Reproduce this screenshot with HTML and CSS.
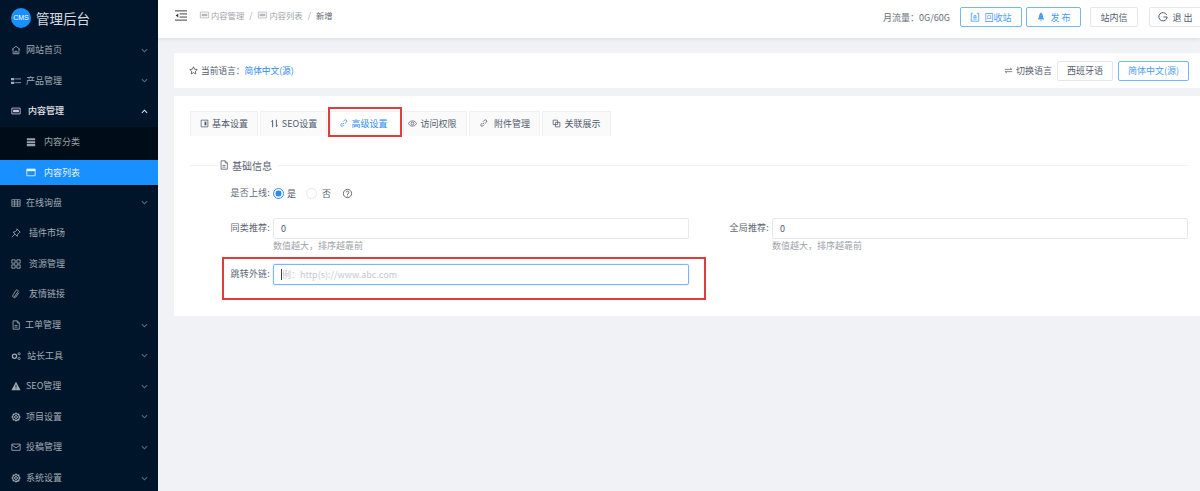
FILE: index.html
```html
<!DOCTYPE html>
<html lang="zh-CN">
<head>
<meta charset="utf-8">
<title>管理后台</title>
<link rel="stylesheet" href="styles.css">
</head>
<body>
<svg class="defs" width="0" height="0">
  <symbol id="i-doc" viewBox="0 0 12 12"><path d="M2.5 1h5l2.5 2.500V11h-7.500zM7.500 1v2.500H10M4.300 6.500h3.400M4.300 8.500h3.400" fill="none" stroke="currentColor"/></symbol>
  <symbol id="i-link" viewBox="0 0 12 12"><path d="M5 7l2-2M4.500 5.200L2.800 7a1.600 1.600 0 0 0 2.300 2.300l1.700-1.800M5.300 3.500L7 1.800a1.600 1.600 0 0 1 3 2.300L8 6" fill="none" stroke="currentColor"/></symbol>
  <symbol id="i-gear" viewBox="0 0 12 12"><circle cx="6" cy="6" r="1.700" fill="none" stroke="currentColor" stroke-width="1.200"/><circle cx="6" cy="6" r="4" fill="none" stroke="currentColor" stroke-width="1.300"/><path d="M6 .5v2M6 9.500v2M.5 6h2M9.500 6h2M2.100 2.100l1.400 1.400M8.500 8.500l1.400 1.400M2.100 9.900l1.400-1.400M8.500 3.500l1.400-1.400" stroke="currentColor" stroke-width="1.300"/></symbol>
  <symbol id="i-card" viewBox="0 0 12 12"><path d="M1 2.500h10v7H1z" fill="none" stroke="currentColor"/><path d="M2.500 4.500h7v3h-7z" fill="currentColor"/></symbol>
  <symbol id="i-chev" viewBox="0 0 8 5"><path d="M1 1l3 3 3-3" fill="none" stroke="currentColor" stroke-width="1.200"/></symbol>
</svg>
<div class="app">
  <aside class="sidebar">
    <div class="brand"><span class="brand-logo">CMS</span><span class="brand-name">管理后台</span></div>
    <nav class="menu">
      <a class="menu-item"><svg class="mi" viewBox="0 0 12 12"><path d="M1 5.500L6 1.500l5 4M2.500 4.500V10.500h7V4.500M4.800 10.500V7.500h2.400v3" fill="none" stroke="currentColor"/></svg><span class="ml gap-5">网站首页</span><svg class="chev"><use href="#i-chev"/></svg></a>
      <a class="menu-item"><svg class="mi" viewBox="0 0 12 12"><path d="M0 2.500h4v2.500H0zM0 7h4v2.500H0z" fill="currentColor"/><path d="M5 3.500h7M5 8h7" stroke="currentColor"/></svg><span class="ml gap-5">产品管理</span><svg class="chev"><use href="#i-chev"/></svg></a>
      <a class="menu-item open"><svg class="mi card"><use href="#i-card"/></svg><span class="ml gap-7">内容管理</span><svg class="chev up"><use href="#i-chev"/></svg></a>
      <div class="submenu">
        <a class="sub-item first"><svg class="si" viewBox="0 0 12 12"><path d="M1 1.500h10v2.500H1zM1 5h10v2.500H1zM1 8.500h10V11H1z" fill="currentColor"/></svg><span>内容分类</span></a>
        <a class="sub-item active"><svg class="si" viewBox="0 0 12 12"><path d="M1 2.500h10v8H1z" fill="none" stroke="currentColor"/><path d="M1 2.500h10v2.500H1z" fill="currentColor"/></svg><span>内容列表</span></a>
      </div>
      <a class="menu-item"><svg class="mi" viewBox="0 0 12 12"><path d="M1 2h10v8H1zM1 4.700h10M1 7.300h10M4.300 2v8M7.700 2v8" fill="none" stroke="currentColor" stroke-width=".9"/></svg><span class="ml gap-5">在线询盘</span><svg class="chev"><use href="#i-chev"/></svg></a>
      <a class="menu-item"><svg class="mi" viewBox="0 0 12 12"><path d="M7 1l4 4-1 .5-2 2-.5 2.500-5-5 2.500-.5 2-2zM4.500 7.500L1 11" fill="none" stroke="currentColor"/></svg><span class="ml gap-8">插件市场</span></a>
      <a class="menu-item"><svg class="mi" viewBox="0 0 12 12"><path d="M1 1h4v4H1zM7 1h4v4H7zM1 7h4v4H1zM7 7h4v4H7z" fill="none" stroke="currentColor"/></svg><span class="ml gap-8">资源管理</span></a>
      <a class="menu-item"><svg class="mi" viewBox="0 0 12 12"><path d="M4 9.500L8.500 3a1.500 1.500 0 0 0-2.500-1.500L2.500 7a2 2 0 0 0 3.300 2.600L9.500 4.500" fill="none" stroke="currentColor"/></svg><span class="ml gap-8">友情链接</span></a>
      <a class="menu-item"><svg class="mi"><use href="#i-doc"/></svg><span class="ml gap-4">工单管理</span><svg class="chev"><use href="#i-chev"/></svg></a>
      <a class="menu-item"><svg class="mi" viewBox="0 0 12 12"><circle cx="4.200" cy="6.300" r="2.500" fill="none" stroke="currentColor" stroke-width="1.600"/><circle cx="9.800" cy="3.300" r="1.300" fill="none" stroke="currentColor"/><circle cx="9.800" cy="9" r="1.300" fill="none" stroke="currentColor"/></svg><span class="ml gap-6">站长工具</span><svg class="chev"><use href="#i-chev"/></svg></a>
      <a class="menu-item"><svg class="mi" viewBox="0 0 12 12"><path d="M6 1l5.500 10H.5z" fill="currentColor"/><path d="M6 4.500v3.500M6 9v1" stroke="#001529"/></svg><span class="ml gap-5">SEO管理</span><svg class="chev"><use href="#i-chev"/></svg></a>
      <a class="menu-item"><svg class="mi"><use href="#i-gear"/></svg><span class="ml gap-5">项目设置</span><svg class="chev"><use href="#i-chev"/></svg></a>
      <a class="menu-item"><svg class="mi" viewBox="0 0 12 12"><path d="M1 2.500h10v7.500H1zM1 3.500l5 3.500 5-3.500" fill="none" stroke="currentColor"/></svg><span class="ml gap-5">投稿管理</span><svg class="chev"><use href="#i-chev"/></svg></a>
      <a class="menu-item"><svg class="mi"><use href="#i-gear"/></svg><span class="ml gap-5">系统设置</span><svg class="chev"><use href="#i-chev"/></svg></a>
    </nav>
  </aside>
  <div class="main">
    <header class="topbar">
      <svg class="toggle" viewBox="0 0 13 11"><path d="M0 .5h13M5 3.800h8M5 7.200h8M0 10.500h13" stroke="currentColor"/><path d="M3.500 3.200L.8 5.500l2.700 2.300z" fill="currentColor"/></svg>
      <div class="crumbs">
        <span class="crumb"><svg class="ci"><use href="#i-card"/></svg>内容管理</span><span class="sep">/</span>
        <span class="crumb"><svg class="ci"><use href="#i-card"/></svg>内容列表</span><span class="sep">/</span>
        <span class="crumb current">新增</span>
      </div>
      <div class="top-actions">
        <span class="traffic">月流量：0G/60G</span>
        <a class="btn primary recycle"><svg class="bi" viewBox="0 0 12 12"><path d="M3.500 1.500H1.500v9.500h9V1.500h-2M4 8.500h4M6 3.500l1.800 3H4.200z" fill="none" stroke="currentColor"/></svg>回收站</a>
        <a class="btn primary publish"><svg class="bi" viewBox="0 0 12 12"><path d="M6 .5c2 1.500 2.500 3.500 2.500 6L10 9H2l1.500-2.500C3.500 4 4 2 6 .5zM5 10h2l-1 1.500z" fill="currentColor"/></svg>发 布</a>
        <a class="btn inbox">站内信</a>
        <a class="btn logout"><svg class="bi" viewBox="0 0 12 12"><path d="M10.500 3.500A5 5 0 1 0 11 6H6.500" fill="none" stroke="currentColor" stroke-width="1.200"/></svg>退 出</a>
      </div>
    </header>
    <div class="content">
      <section class="lang-card">
        <div class="lang-current">
          <svg class="star" viewBox="0 0 12 12"><path d="M6 1l1.500 3.300 3.500.4-2.600 2.400.7 3.500L6 8.900l-3.100 1.700.7-3.500L1 4.700l3.500-.4z" fill="none" stroke="currentColor"/></svg>
          <span>当前语言：</span><a class="link">简体中文(源)</a>
        </div>
        <div class="lang-switch">
          <svg class="swap" viewBox="0 0 12 12"><path d="M1 4.500h9.500L8 2.500M11 7.500H1.500L4 9.500" fill="none" stroke="currentColor"/></svg>
          <span class="switch-label">切换语言</span>
          <a class="btn lang">西班牙语</a>
          <a class="btn primary lang">简体中文(源)</a>
        </div>
      </section>
      <section class="form-card">
        <div class="tabs">
          <a class="tab t1"><svg class="ti" viewBox="0 0 12 12"><path d="M1.500 1.500h9v9h-9z" fill="none" stroke="currentColor"/><path d="M6 3.500h2.500v5H6z" fill="currentColor"/></svg>基本设置</a>
          <a class="tab t2"><svg class="ti" viewBox="0 0 12 12"><path d="M3.500 11V2M3.500 1.500L2 3.500M8.500 1v9M8.500 10.500l1.500-2" fill="none" stroke="currentColor" stroke-width="1.300"/></svg>SEO设置</a>
          <a class="tab t3 active"><svg class="ti"><use href="#i-link"/></svg>高级设置</a>
          <a class="tab t4"><svg class="ti" viewBox="0 0 12 12"><path d="M.5 6C2 3.500 4 2.500 6 2.500S10 3.500 11.500 6C10 8.500 8 9.500 6 9.500S2 8.500.5 6z" fill="none" stroke="currentColor"/><circle cx="6" cy="6" r="1.800" fill="none" stroke="currentColor"/></svg>访问权限</a>
          <a class="tab t5"><svg class="ti wide"><use href="#i-link"/></svg>附件管理</a>
          <a class="tab t6"><svg class="ti" viewBox="0 0 12 12"><path d="M1.500 1.500h6v6h-6z" fill="none" stroke="currentColor"/><path d="M4.500 4.500h6v6h-6z" fill="none" stroke="currentColor"/></svg>关联展示</a>
        </div>
        <div class="legend">
          <span class="legend-line short"></span>
          <svg class="legend-icon"><use href="#i-doc"/></svg>
          <span class="legend-text">基础信息</span>
          <span class="legend-line"></span>
        </div>
        <div class="field radio-row">
          <label class="label">是否上线:</label>
          <span class="radio on"></span><span class="radio-text">是</span>
          <span class="radio off"></span><span class="radio-text">否</span>
          <svg class="help" viewBox="0 0 12 12"><circle cx="6" cy="6" r="4.500" fill="none" stroke="currentColor"/><path d="M4.500 4.800A1.500 1.500 0 1 1 6 6.500v1M6 8.300v1" fill="none" stroke="currentColor"/></svg>
        </div>
        <div class="form-grid">
          <div class="field">
            <label class="label">同类推荐:</label>
            <div class="control"><input class="input" value="0"><p class="hint">数值越大，排序越靠前</p></div>
          </div>
          <div class="field">
            <label class="label">全局推荐:</label>
            <div class="control"><input class="input" value="0"><p class="hint">数值越大，排序越靠前</p></div>
          </div>
          <div class="field link-field">
            <label class="label">跳转外链:</label>
            <div class="control"><div class="input focus"><span class="caret"></span><span class="placeholder">例：http(s)://www.abc.com</span></div></div>
          </div>
        </div>
      </section>
    </div>
  </div>
</div>
<div class="mark mark-tab"></div>
<div class="mark mark-input"></div>
</body>
</html>
```
FILE: styles.css
```css
* { box-sizing: border-box; }
html, body { margin: 0; height: 100%; overflow: hidden; }
body {
  position: relative;
  font-family: "Noto Sans CJK SC", "Noto Sans", sans-serif;
  font-size: 9px;
  color: #515a6e;
  background: #f0f2f5;
}
a { text-decoration: none; color: inherit; }
p { margin: 0; }
.defs { position: absolute; }
.app { display: flex; height: 491px; }

/* sidebar */
.sidebar { width: 158px; flex: none; background: #001529; color: #a3acb6; overflow: hidden; }
.brand { height: 35px; display: flex; align-items: center; padding: 1px 0 0 11px; }
.brand-logo {
  width: 20px; height: 20px; border-radius: 50%;
  background: #1890ff; color: #fff;
  font: 7px/20px "Liberation Sans", sans-serif;
  text-align: center;
}
.brand-name { margin-left: 5px; font-size: 13.5px; color: #d6dbe0; line-height: 20px; }
.menu-item {
  display: flex; align-items: center;
  height: 30.6px; padding-left: 11px; padding-right: 10px;
}
.menu-item.open { color: #e4e7ea; font-weight: 500; }
.mi { width: 10px; height: 10px; flex: none; }
.mi.card { color: #c9c3e6; }
.ml { flex: 1; line-height: 12px; }
.gap-4 { margin-left: 4px; }
.gap-5 { margin-left: 5px; }
.gap-6 { margin-left: 6px; }
.gap-7 { margin-left: 7px; }
.gap-8 { margin-left: 8px; }
.chev { width: 7px; height: 5px; flex: none; color: #5f6b78; }
.chev.up { transform: rotate(180deg); color: #dfe3e7; }
.submenu { background: #000c17; padding-bottom: 2.600px; }
.sub-item { display: flex; align-items: center; padding-left: 26px; color: #9aa3ad; }
.sub-item.first { height: 33px; padding-bottom: 3px; }
.sub-item.active { height: 25px; background: #1890ff; color: #e8f4ff; }
.si { width: 10px; height: 10px; margin-right: 8px; flex: none; }

/* top bar */
.main { flex: 1; min-width: 0; }
.topbar {
  height: 38px; background: #fff; display: flex; align-items: flex-start;
  box-shadow: 0 1px 4px rgba(0, 21, 41, .1);
  overflow: hidden;
}
.toggle { width: 12px; height: 11px; margin: 10px 0 0 17px; color: #333; flex: none; }
.crumbs { display: flex; align-items: center; height: 14px; margin: 8px 0 0 12px; color: #a0a4ab; white-space: nowrap; font-size: 8.3px; }
.crumb { display: inline-flex; align-items: center; }
.crumb.current { color: #5f6470; }
.ci { width: 11px; height: 10px; margin-right: 1px; color: #b5b8bd; }
.sep { margin: 0 5px; }
.top-actions { display: flex; align-items: center; margin: 7px -2px 0 auto; flex: none; }
.traffic { white-space: nowrap; color: #666d7a; flex: none; }
.btn {
  display: inline-flex; align-items: center; justify-content: center;
  height: 20px; flex: none; white-space: nowrap;
  border: 1px solid #e4e6ea; border-radius: 2px;
  background: #fff; color: #515a6e;
}
.btn.primary { border-color: #75b7f2; color: #4b9df0; }
.bi { width: 10px; height: 10px; margin-right: 4px; }
.recycle { width: 62px; margin-left: 10px; }
.publish { width: 55px; margin-left: 4px; }
.inbox { width: 48px; margin-left: 9px; }
.logout { width: 53px; margin-left: 11px; }

/* page */
.content { padding: 15px 0 0 16px; }
.lang-card {
  height: 35px; background: #fff; display: flex; align-items: center;
  justify-content: space-between; padding: 0 11px 0 15px;
}
.lang-current { display: flex; align-items: center; font-size: 8.7px; }
.star { width: 9px; height: 9px; margin-right: 3px; color: #444; }
.link { color: #2d8cf0; }
.lang-switch { display: flex; align-items: center; }
.swap { width: 9px; height: 9px; margin-right: 3px; color: #666; }
.switch-label { margin-right: 5px; }
.btn.lang { padding: 0 9px; }
.btn.lang + .btn.lang { margin-left: 5px; }

.form-card { margin-top: 8px; height: 220px; background: #fff; padding: 15px 12px 0 16px; }
.tabs { display: flex; height: 25px; }
.tab {
  display: flex; align-items: center; justify-content: center;
  height: 25px; margin-right: 2px; padding-bottom: 1px;
  background: #fafafa; border: 1px solid #f0f0f0; border-bottom: 0;
  color: #515a6e;
}
.tab.active { background: #fff; color: #2d8cf0; }
.t1 { width: 68px; }
.t2 { width: 67px; }
.t3 { width: 71px; margin-left: 1px; padding-right: 4px; }
.t4 { width: 64px; padding-right: 5px; }
.t5 { width: 71px; }
.t6 { width: 69px; margin-right: 0; }
.ti { width: 9px; height: 9px; margin-right: 3px; }
.ti.wide { margin-right: 6px; }
.legend { display: flex; align-items: center; height: 16px; margin-top: 21px; color: #5a6170; }
.legend-line { flex: 1; height: 1px; background: #f2f2f2; margin-left: 6px; }
.legend-line.short { flex: none; width: 29px; margin: 0; }
.legend-icon { width: 10px; height: 10px; margin-right: 3px; }
.legend-text { font-size: 10px; }
.field { display: flex; align-items: flex-start; }
.label { width: 83px; padding-right: 3px; text-align: right; flex: none; line-height: 20px; letter-spacing: .2px; color: #606674; white-space: nowrap; }
.radio-row { align-items: center; height: 20px; margin-top: 10px; }
.radio { width: 11px; height: 11px; border-radius: 50%; border: 1px solid #e3e6ea; flex: none; background: #fff; }
.radio.on { border-color: #2d8cf0; background: radial-gradient(circle, #2d8cf0 0 2.800px, #fff 3.300px); }
.radio.off { margin-left: 10px; }
.radio-text { margin-left: 3px; }
.radio.off + .radio-text { margin-left: 5px; }
.help { width: 11px; height: 11px; margin-left: 11px; color: #5a6170; }
.form-grid { display: grid; grid-template-columns: 499px 499px; margin-top: 15px; }
.control { width: 416px; }
.input {
  display: block; width: 416px; height: 21px; padding: 0 7px;
  border: 1px solid #e6e8eb; border-radius: 2px;
  font: inherit; color: #515a6e; background: #fff; outline: 0;
}
.input.focus { display: flex; align-items: center; padding: 0 7px; border-color: #7bb8f3; box-shadow: 0 0 2px rgba(45,140,240,.35); }
.caret { width: 1px; height: 11px; background: #444; }
.placeholder { color: #c5c8ce; }
.hint { margin-top: 1px; height: 16px; line-height: 12px; color: #a0a4ab; }
.link-field { margin-top: 8px; grid-column: 1; }

/* red annotation boxes drawn over the screenshot */
.mark { position: absolute; border: 2px solid #e23b3b; pointer-events: none; }
.mark-tab { left: 328px; top: 107px; width: 74px; height: 30px; }
.mark-input { left: 222px; top: 257px; width: 484px; height: 43px; }
```
